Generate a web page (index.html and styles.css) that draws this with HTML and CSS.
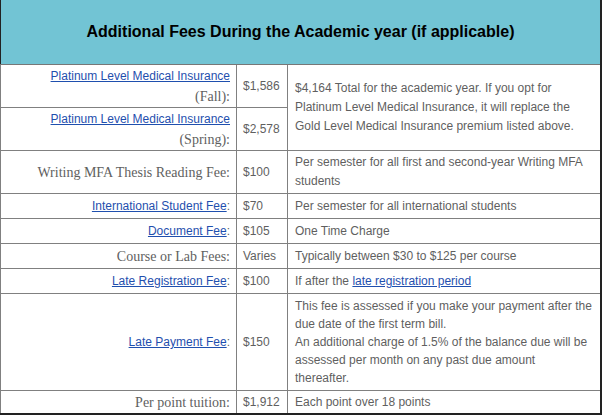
FILE: index.html
```html
<!DOCTYPE html>
<html>
<head>
<meta charset="utf-8">
<link rel="stylesheet" href="styles.css">
</head>
<body>
<table class="fees">
  <colgroup>
    <col class="c-label">
    <col class="c-amount">
    <col class="c-desc">
  </colgroup>
  <thead>
    <tr><th colspan="3" class="title">Additional Fees During the Academic year (if applicable)</th></tr>
  </thead>
  <tbody>
    <tr class="r2">
      <td class="label"><a href="#">Platinum Level Medical Insurance</a><span class="serif sub">(Fall):</span></td>
      <td class="amount">$1,586</td>
      <td class="desc" rowspan="2">$4,164 Total for the academic year. If you opt for Platinum Level Medical Insurance, it will replace the Gold Level Medical Insurance premium listed above.</td>
    </tr>
    <tr class="r2">
      <td class="label"><a href="#">Platinum Level Medical Insurance</a><span class="serif sub">(Spring):</span></td>
      <td class="amount">$2,578</td>
    </tr>
    <tr class="r2">
      <td class="label serif">Writing MFA Thesis Reading Fee:</td>
      <td class="amount">$100</td>
      <td class="desc">Per semester for all first and second-year Writing MFA students</td>
    </tr>
    <tr class="r1">
      <td class="label"><a href="#">International Student Fee</a>:</td>
      <td class="amount">$70</td>
      <td class="desc">Per semester for all international students</td>
    </tr>
    <tr class="r1">
      <td class="label"><a href="#">Document Fee</a>:</td>
      <td class="amount">$105</td>
      <td class="desc">One Time Charge</td>
    </tr>
    <tr class="r1">
      <td class="label serif">Course or Lab Fees:</td>
      <td class="amount">Varies</td>
      <td class="desc">Typically between $30 to $125 per course</td>
    </tr>
    <tr class="r1">
      <td class="label"><a href="#">Late Registration Fee</a>:</td>
      <td class="amount">$100</td>
      <td class="desc">If after the <a href="#">late registration period</a></td>
    </tr>
    <tr class="r5">
      <td class="label"><a href="#">Late Payment Fee</a>:</td>
      <td class="amount">$150</td>
      <td class="desc">This fee is assessed if you make your payment after the due date of the first term bill.<br>An additional charge of 1.5% of the balance due will be assessed per month on any past due amount<br>thereafter.</td>
    </tr>
    <tr class="last">
      <td class="label serif">Per point tuition:</td>
      <td class="amount">$1,912</td>
      <td class="desc">Each point over 18 points</td>
    </tr>
  </tbody>
</table>
</body>
</html>
```

FILE: styles.css
```css
html, body {
  margin: 0;
  padding: 0;
  background: #ffffff;
}

.fees {
  width: 602px;
  border-collapse: collapse;
  table-layout: fixed;
  font-family: "Liberation Sans", Arial, sans-serif;
  font-size: 12px;
  color: #5f5f5f;
  border-left: 1px solid #222222;
  border-right: 2px solid #222222;
  border-bottom: 2px solid #222222;
}

.c-label { width: 236px; }
.c-amount { width: 51px; }

.title {
  height: 64px;
  padding: 0;
  background: #72c4d4;
  color: #000000;
  font-size: 16px;
  font-weight: bold;
  text-align: center;
  vertical-align: middle;
  border-bottom: 1px solid #777777;
}

td {
  padding: 2px 6px 2px 6px;
  line-height: 19px;
  border: 1px solid #808080;
  vertical-align: middle;
}

.label {
  text-align: right;
  padding-right: 6px;
}

.amount {
  padding-left: 6px;
  padding-right: 2px;
}

.desc {
  padding-left: 7px;
}

.serif {
  font-family: "Liberation Serif", "Times New Roman", serif;
  font-size: 14px;
  color: #5f5f5f;
}

.sub {
  display: block;
  line-height: 21px;
  height: 19px;
}

.r1 td {
  padding-top: 3px;
  padding-bottom: 2px;
}

.r5 td {
  line-height: 18px;
  padding-top: 3px;
  padding-bottom: 3px;
}

.last td {
  padding-top: 2px;
  padding-bottom: 1px;
}

a {
  color: #1f4fae;
  text-decoration: underline;
}
```
